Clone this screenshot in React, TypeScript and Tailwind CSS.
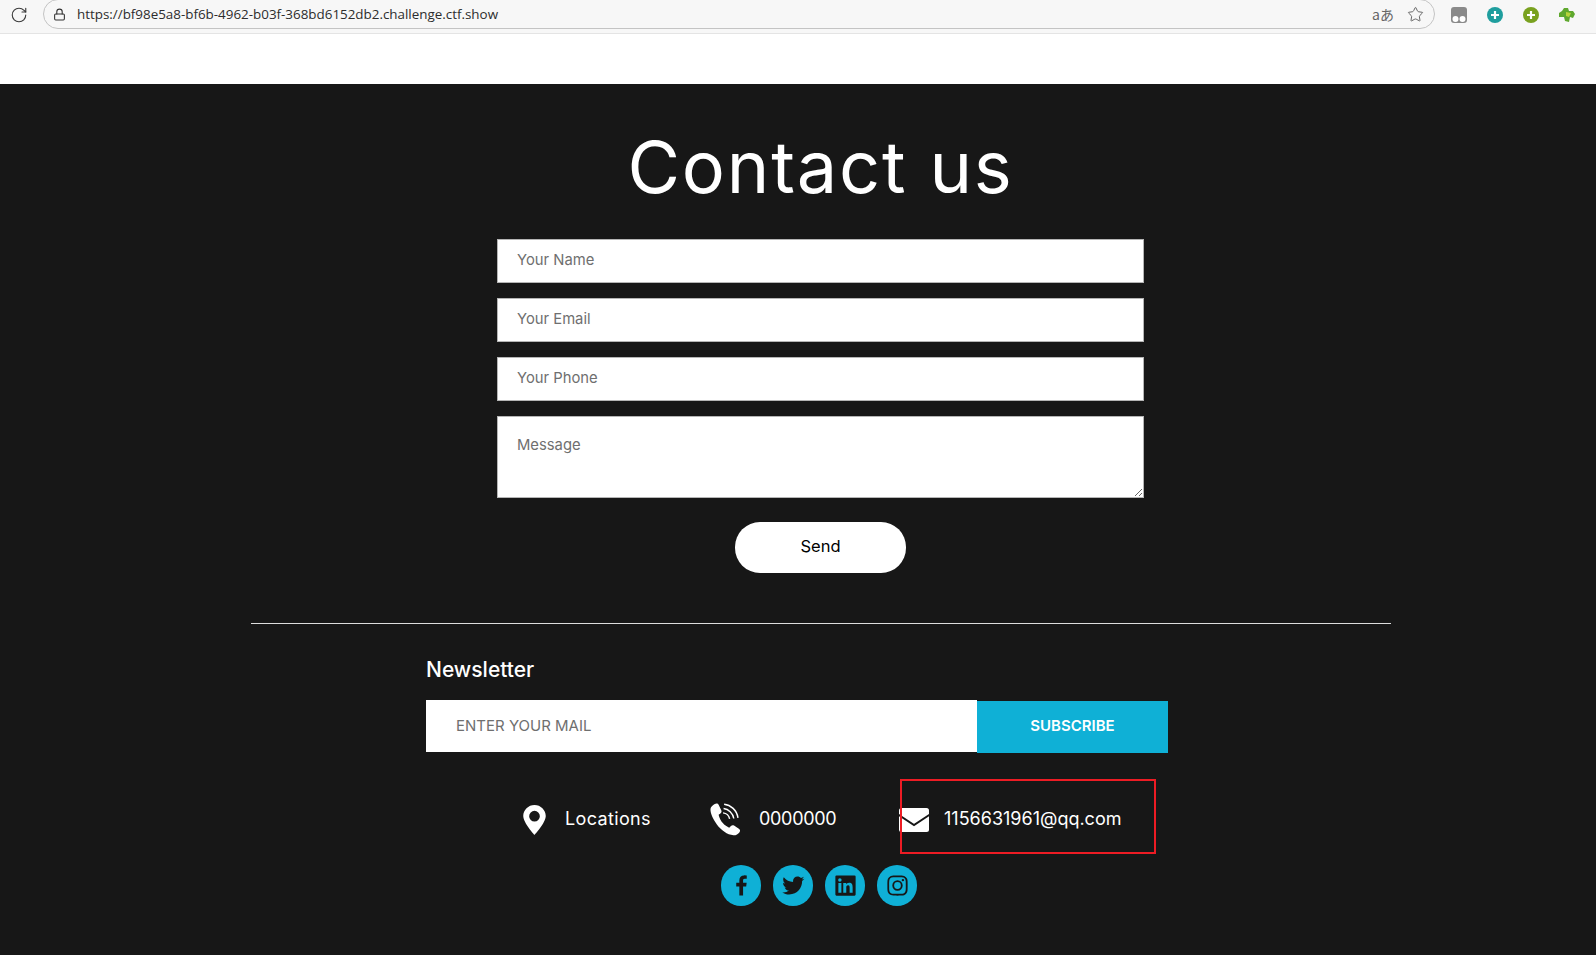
import { BiLogoFacebook, BiLogoTwitter, BiLogoLinkedinSquare, BiLogoInstagram } from "react-icons/bi"
import { LuRotateCw, LuLock, LuStar } from "react-icons/lu"

const FONT = "font-['Inter','Noto_Sans',sans-serif]"

function PinIcon() {
  return (
    <svg viewBox="0 0 24 32" className="w-[23px] h-[30px] text-white">
      <path
        fillRule="evenodd"
        fill="currentColor"
        d="M12 0C5.4 0 0 5.3 0 11.8 0 19 12 32 12 32S24 19 24 11.8C24 5.3 18.6 0 12 0ZM12 6.2a5.7 5.7 0 1 1 0 11.4 5.7 5.7 0 0 1 0-11.4Z"
      />
    </svg>
  )
}

function PhoneWaves() {
  return (
    <svg viewBox="2 1.5 28.5 30" className="w-[33px] h-[33px] text-white" fill="none" stroke="currentColor">
      <path
        d="M6.5 2.5 C8 1.6 9.4 2 10 3.2 L12.4 8 C13 9.2 12.6 10.2 11.6 11 L10 12.2 C10.6 15 12 17.8 14 20 C15.6 21.8 17.6 23.2 19.6 24 L21.2 22.4 C22 21.6 23 21.4 24 22 L28.4 25 C29.6 25.8 29.8 27 29 28 C27.6 29.8 25.6 31 23.4 30.8 C17.8 30.2 12.4 26.4 8.4 21 C4.8 16 2.4 11 2.6 7 C2.7 5.2 4.6 3.6 6.5 2.5 Z"
        fill="currentColor"
        stroke="none"
      />
      <path d="M14 10.5 C17 10.8 19.4 13 20 16" strokeWidth="1.3" />
      <path d="M14.5 6.5 C19 7 23 10.6 23.8 15.6" strokeWidth="1.3" />
      <path d="M15 2.6 C21 3.2 26.6 8 27.6 15" strokeWidth="1.3" />
    </svg>
  )
}

function MailIcon() {
  return (
    <svg viewBox="0 0 30 24" className="w-[30px] h-[24px]">
      <rect width="30" height="24" rx="2.5" fill="#fff" />
      <path d="M-1 6.5 15 17 31 6.5" fill="none" stroke="#171717" strokeWidth="2" />
    </svg>
  )
}

function BrowserBar() {
  return (
    <div className="h-[34px] bg-[#f7f7f7] border-b border-[#e4e4e4] flex items-start">
      <div className="w-[43px] h-[29px] flex items-center justify-center">
        <LuRotateCw className="w-[18px] h-[18px] text-[#3a3a3a] ml-[-6px]" strokeWidth={1.5} />
      </div>
      <div className="w-[1392px] h-[30px] mt-[-1px] border border-[#c4c4c4] rounded-r-[15px] rounded-l-[15px] flex items-center pl-[9px] pr-[10px]">
        <LuLock className="w-[13px] h-[13px] text-[#333]" strokeWidth={2} />
        <span className="ml-[11px] text-[13.4px] text-[#2d2d2d] font-['Open_Sans',sans-serif] whitespace-nowrap">
          https://bf98e5a8-bf6b-4962-b03f-368bd6152db2.challenge.ctf.show
        </span>
        <span className="ml-auto text-[14px] leading-none text-[#666] font-['Noto_Sans_CJK_JP','Open_Sans',sans-serif]">aあ</span>
        <LuStar className="ml-[13px] w-[17px] h-[17px] text-[#666]" strokeWidth={1.4} />
      </div>
      <div className="flex items-center h-[29px] ml-[16px] gap-[20px]">
        <svg viewBox="0 0 16 16" className="w-[16px] h-[16px]">
          <rect width="16" height="16" rx="3" fill="#8a8a8a" />
          <circle cx="4.5" cy="12" r="3" fill="#fff" />
          <circle cx="11.5" cy="12" r="3" fill="#fff" />
        </svg>
        <svg viewBox="0 0 16 16" className="w-[16px] h-[16px]">
          <circle cx="8" cy="8" r="8" fill="#1f9e9e" />
          <path d="M8 4v8M4 8h8" stroke="#fff" strokeWidth="2.2" />
        </svg>
        <svg viewBox="0 0 16 16" className="w-[16px] h-[16px]">
          <circle cx="8" cy="8" r="8" fill="#79a11f" />
          <path d="M8 4v8M4 8h8" stroke="#fff" strokeWidth="2.2" />
        </svg>
        <svg viewBox="0 0 16 16" className="w-[16px] h-[16px]">
          <path d="M5 1h4l1 3h4l2 3-2 4-3-1-1 5-4-1-1-4-5 0 0-4 3-2z" fill="#5fa82e" />
          <path d="M7 5l5 1-2 4-3-1z" fill="#b7d43a" />
        </svg>
      </div>
    </div>
  )
}

const inputCls =
  "block w-full h-[44px] bg-white border border-[#b5b5b5] px-[19px] pb-[3px] text-[14.8px] text-[#6f6f6f] placeholder:text-[#6f6f6f] " + FONT

export default function App() {
  return (
    <div className={`h-[955px] overflow-hidden bg-white ${FONT}`}>
      <BrowserBar />
      <div className="h-[50px] bg-white" />
      <div className="h-[871px] bg-[#171717] flex flex-col items-center">
        <div className="ml-[45px] flex flex-col items-center">
          <h1 className="mt-[38px] h-[89px] leading-[89px] text-[72px] tracking-[1.8px] text-white font-normal">Contact us</h1>
          <form className="mt-[28px] w-[647px] flex flex-col gap-[15px]">
            <input className={inputCls} placeholder="Your Name" />
            <input className={inputCls} placeholder="Your Email" />
            <input className={inputCls} placeholder="Your Phone" />
            <textarea
              className="block w-full h-[82px] bg-white border border-[#b5b5b5] px-[19px] pt-[17px] text-[14.8px] placeholder:text-[#6f6f6f] resize-y"
              placeholder="Message"
            />
            <button type="button" className="self-center mt-[9px] w-[171px] h-[51px] rounded-[25px] bg-white text-black text-[16.5px] pb-[2px]">
              Send
            </button>
          </form>
          <div className="mt-[50px] w-[1140px] h-px bg-[#dddddd]" />
        </div>
        <div className="mt-[32px] w-[742px] mr-[2px]">
          <h3 className="h-[28px] leading-[28px] text-[21px] font-medium text-white">Newsletter</h3>
          <div className="mt-[16px] flex items-start">
            <input
              className="w-[551px] h-[52px] bg-white px-[30px] pb-[1px] text-[15px] placeholder:text-[#6f6f6f]"
              placeholder="ENTER YOUR MAIL"
            />
            <button type="button" className="mt-[1px] w-[191px] h-[52px] bg-[#0fb0d6] text-white text-[15px] font-semibold pb-[2px]">
              SUBSCRIBE
            </button>
          </div>
        </div>
        <div className="mt-[26px] h-[75px] flex items-center text-[18px] text-white w-[632px] ml-[86px]">
          <div className="w-[187px] pt-[6px] flex items-center">
            <div className="ml-[-2px]">
              <PinIcon />
            </div>
            <span className="ml-[19px] pb-[2px] tracking-[0.35px]">Locations</span>
          </div>
          <div className="w-[188px] pt-[6px] flex items-center">
            <div className="ml-[-3px]">
              <PhoneWaves />
            </div>
            <span className="ml-[17px] pb-[2px] tracking-[-0.3px]">0000000</span>
          </div>
          <div className="relative h-[75px] w-[256px] pt-[6px] flex items-center">
            <div className="ml-[-1px]">
              <MailIcon />
            </div>
            <span className="ml-[15px] pb-[2px] whitespace-nowrap">1156631961@qq.com</span>
            <div className="absolute inset-0 border-2 border-[#ed1c24]" />
          </div>
        </div>
        <div className="mt-[11px] flex gap-[12px] ml-[42px]">
          {[BiLogoFacebook, BiLogoTwitter, BiLogoLinkedinSquare, BiLogoInstagram].map((Icon, i) => (
            <a key={i} className="w-[40px] h-[41px] rounded-full bg-[#0fb0d6] flex items-center justify-center text-[#171717]">
              <Icon className="w-[27px] h-[27px]" />
            </a>
          ))}
        </div>
      </div>
    </div>
  )
}
